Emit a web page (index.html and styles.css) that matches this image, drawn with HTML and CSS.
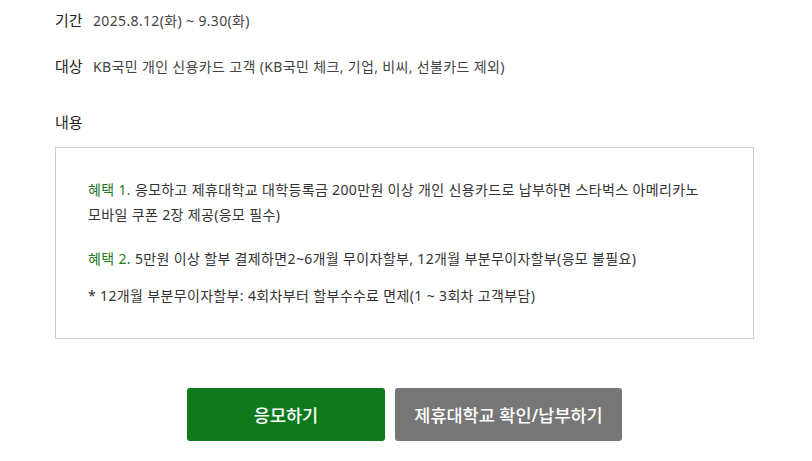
FILE: index.html
```html
<!DOCTYPE html>
<html lang="ko">
<head>
  <meta charset="UTF-8" />
  <meta name="viewport" content="width=device-width, initial-scale=1.0"/>
  <title>이벤트 안내</title>
  <link rel="stylesheet" href="styles.css">
</head>
<body>
  <div class="event">
    <dl class="info">
      <div class="info-row">
        <dt>기간</dt>
        <dd>2025.8.12(화) ~ 9.30(화)</dd>
      </div>
      <div class="info-row">
        <dt>대상</dt>
        <dd>KB국민 개인 신용카드 고객 (KB국민 체크, 기업, 비씨, 선불카드 제외)</dd>
      </div>
    </dl>

    <h3 class="content-title">내용</h3>
    <div class="content-box">
      <p class="benefit"><span class="point">혜택 1.</span> 응모하고 제휴대학교 대학등록금 200만원 이상 개인 신용카드로 납부하면 스타벅스 아메리카노 모바일 쿠폰 2장 제공(응모 필수)</p>
      <p class="benefit"><span class="point">혜택 2.</span> 5만원 이상 할부 결제하면2~6개월 무이자할부, 12개월 부분무이자할부(응모 불필요)</p>
      <p class="note">* 12개월 부분무이자할부: 4회차부터 할부수수료 면제(1 ~ 3회차 고객부담)</p>
    </div>

    <div class="buttons">
      <a href="#" class="btn btn-green">응모하기</a>
      <a href="#" class="btn btn-gray">제휴대학교 확인/납부하기</a>
    </div>
  </div>
</body>
</html>
```

FILE: styles.css
```css
* {
  margin: 0;
  padding: 0;
  box-sizing: border-box;
}

body {
  background: #fff;
  color: #333;
  font-family: "Noto Sans", "Noto Sans CJK KR", sans-serif;
  word-break: keep-all;
}

.event {
  padding: 9px 58px 20px 55px;
}

.info-row {
  display: flex;
  align-items: baseline;
  margin-bottom: 23px;
}

.info dt {
  width: 38px;
  font-size: 15px;
  color: #222;
  line-height: 22px;
}

.info dd {
  font-size: 14px;
  color: #444;
  line-height: 22px;
  letter-spacing: 0.35px;
}

.content-title {
  font-size: 15px;
  font-weight: normal;
  color: #222;
  line-height: 22px;
  margin-top: 33px;
  margin-bottom: 14px;
}

.content-box {
  border: 1px solid #ccc;
  padding: 29px 35px 30px 32px;
}

.content-box p {
  font-size: 14px;
  line-height: 25px;
  color: #333;
  letter-spacing: 0.35px;
}

.benefit {
  margin-bottom: 19px;
}

.benefit + .benefit {
  margin-bottom: 12px;
}

.point {
  color: #1d7a1d;
}

.buttons {
  display: flex;
  justify-content: center;
  gap: 10px;
  margin-top: 49px;
}

.btn {
  display: flex;
  align-items: center;
  justify-content: center;
  height: 53px;
  border-radius: 3px;
  color: #fff;
  text-decoration: none;
  font-size: 17.5px;
  font-weight: 500;
}

.btn-green {
  width: 198px;
  background: #0e7a1b;
}

.btn-gray {
  width: 227px;
  background: #777;
}
```
